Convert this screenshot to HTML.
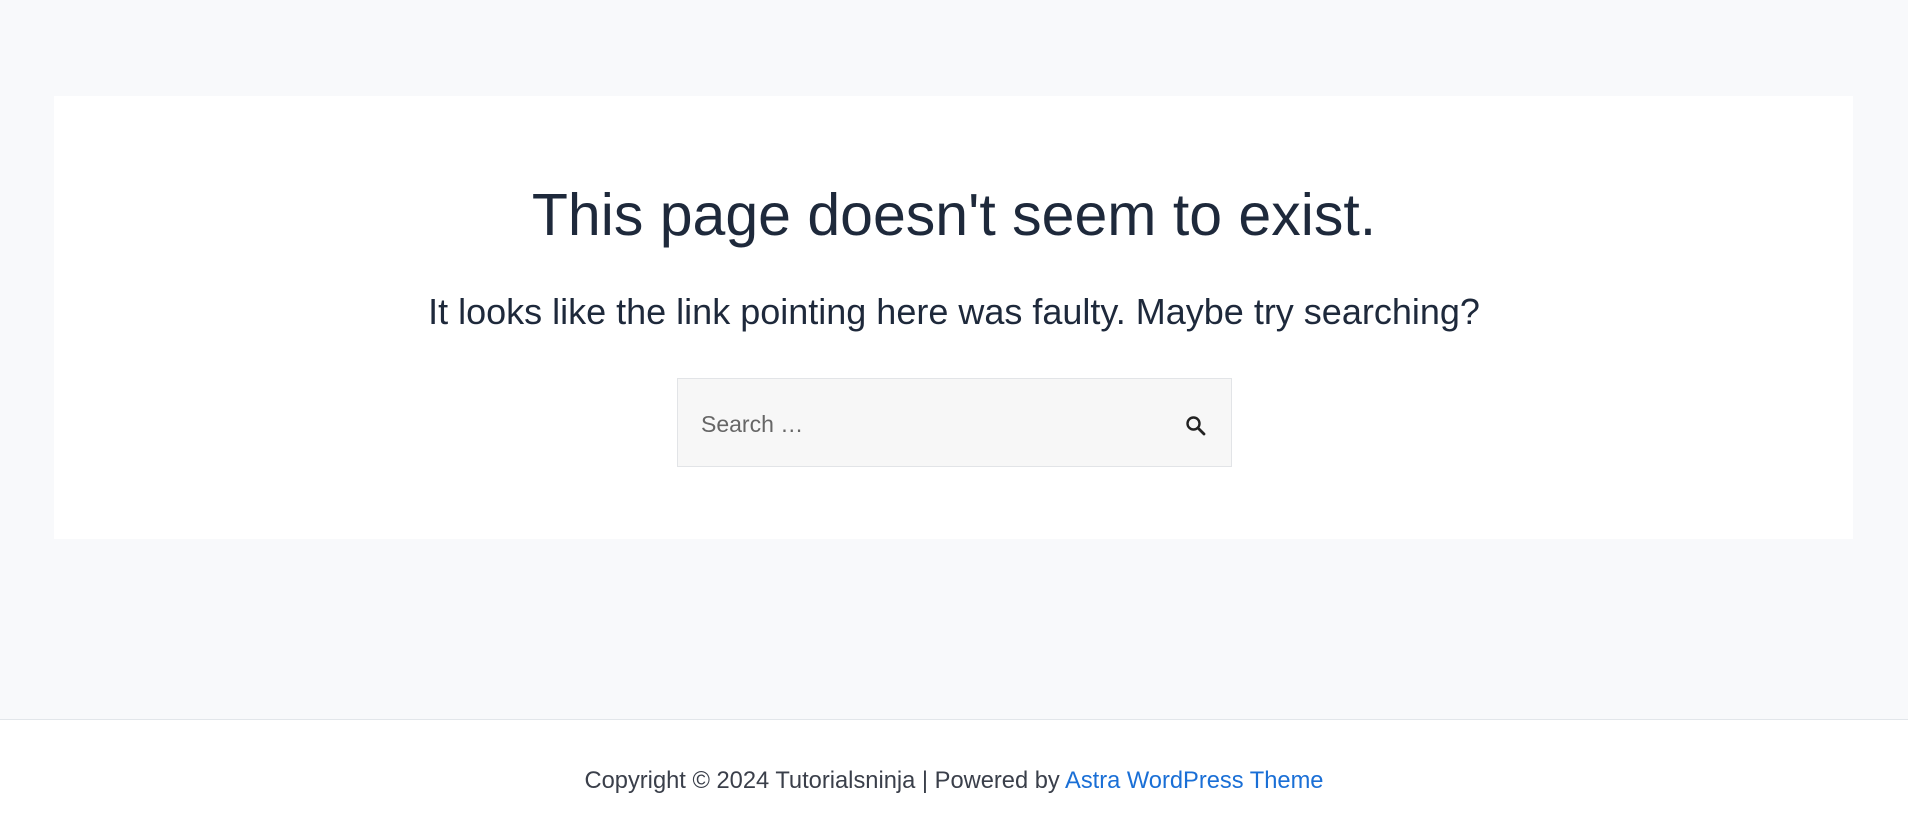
<!DOCTYPE html>
<html><head><meta charset="utf-8"><style>
html,body{margin:0;padding:0;width:1908px;height:839px;overflow:hidden;background:#f8f9fb;font-family:"Liberation Sans",sans-serif;color:#1e293b}
.card{position:absolute;left:54px;top:96px;width:1799px;height:443px;background:#fff}
h1{position:absolute;left:0;right:0;top:185px;margin:0;text-align:center;font-weight:400;font-size:59px;line-height:60px;color:#1e293b}
p.s{position:absolute;left:0;right:0;top:292px;margin:0;text-align:center;font-size:36px;line-height:40px;color:#1e293b}
.search{position:absolute;left:677px;top:378px;width:553px;height:87px;border:1px solid #e2e4e7;background:#f7f7f7}
.search span{position:absolute;left:23px;top:32px;font-size:23px;color:#666}
.search svg{position:absolute;left:506px;top:35px}
.foot{position:absolute;left:0;top:719px;width:1908px;height:120px;background:#fff;border-top:1px solid #e2e6ea}
.foot div{position:absolute;left:0;right:0;top:47px;text-align:center;font-size:23.7px;line-height:28px;color:#3a3f4a}
.foot a{color:#1a6fd6;text-decoration:none}
</style></head><body>
<div class="card"></div>
<h1>This page doesn't seem to exist.</h1>
<p class="s">It looks like the link pointing here was faulty. Maybe try searching?</p>
<div class="search"><span>Search …</span>
<svg width="24" height="24" viewBox="0 0 24 24"><circle cx="9.5" cy="9.5" r="6" fill="none" stroke="#222" stroke-width="2.4"/><path d="M14 14l6 6" stroke="#222" stroke-width="2.8" stroke-linecap="round"/></svg></div>
<div class="foot"><div>Copyright © 2024 Tutorialsninja | Powered by <a>Astra WordPress Theme</a></div></div>
</body></html>
